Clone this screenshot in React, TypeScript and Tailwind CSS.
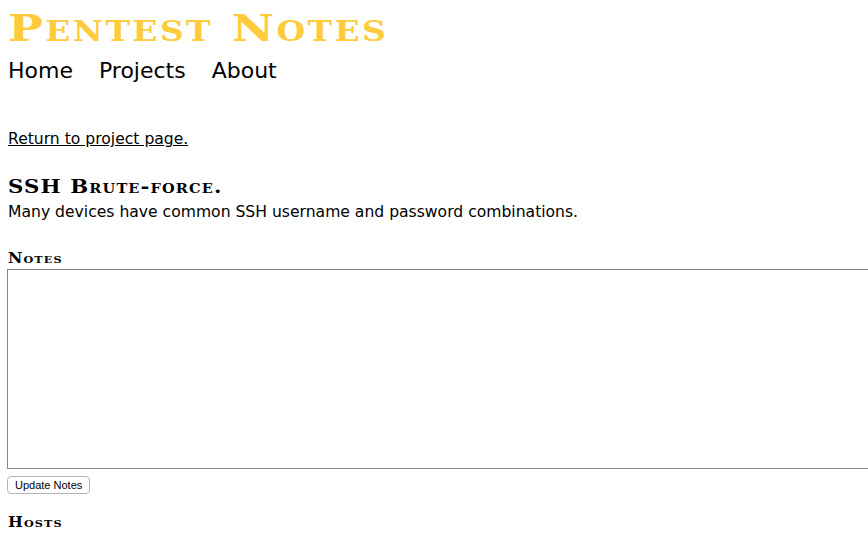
export default function App() {
  const caps = { fontVariant: 'small-caps' } as const
  return (
    <div className="bg-white min-h-[541px] overflow-hidden px-2 text-black font-['DejaVu_Sans',sans-serif]">
      <h1
        className="text-[#fdcb3c] font-bold text-[38px] leading-[44px] pt-[6px] font-['DejaVu_Serif',serif]"
        style={caps}
      >
        <span className="inline-block origin-left scale-x-[1.22] tracking-[2px]">Pentest Notes</span>
      </h1>
      <nav className="flex gap-[26px] text-[22px] leading-[28px] mt-[7px]">
        <a href="#">Home</a>
        <a href="#">Projects</a>
        <a href="#">About</a>
      </nav>

      <a href="#" className="block underline text-[15.6px] mt-[43px]">
        Return to project page.
      </a>

      <h2
        className="font-bold text-[19px] leading-[24px] mt-[23px] font-['DejaVu_Serif',serif]"
        style={caps}
      >
        <span className="inline-block origin-left scale-x-[1.12] tracking-[1px]">SSH Brute-force.</span>
      </h2>
      <p className="text-[15.6px] leading-[20px] mt-[4px]">
        Many devices have common SSH username and password combinations.
      </p>

      <h3
        className="font-bold text-[14px] leading-[18px] mt-[27px] font-['DejaVu_Serif',serif]"
        style={caps}
      >
        <span className="inline-block origin-left scale-x-[1.12] tracking-[1px]">Notes</span>
      </h3>
      <textarea className="block w-[900px] h-[200px] -ml-px mt-[2px] border border-[#8a8a8a] resize-none" />
      <button className="mt-[7px] -ml-px px-[7px] h-[18px] text-[11px] leading-[16px] border border-[#b5b5b5] rounded-[4px] bg-white font-['Liberation_Sans',sans-serif]">
        Update Notes
      </button>

      <h3
        className="font-bold text-[14px] leading-[18px] mt-[17px] font-['DejaVu_Serif',serif]"
        style={caps}
      >
        <span className="inline-block origin-left scale-x-[1.12] tracking-[1px]">Hosts</span>
      </h3>
    </div>
  )
}
